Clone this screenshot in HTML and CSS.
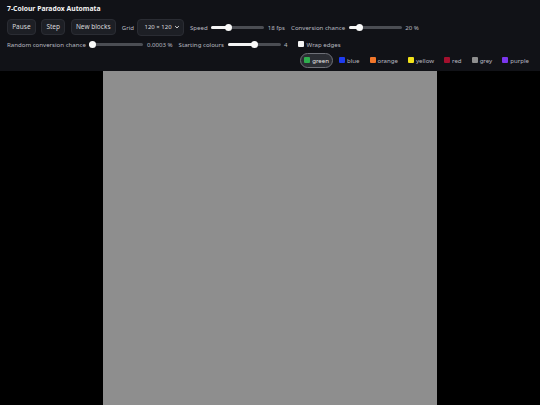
FILE: index.html
```html
<!DOCTYPE html>
<html>
<head>
<meta charset="utf-8">
<link rel="stylesheet" href="styles.css">
</head>
<body>
<header class="bar">
  <h1 class="title">7-Colour Paradox Automata</h1>
  <div class="controls">
    <div class="buttons">
      <button class="btn">Pause</button>
      <button class="btn">Step</button>
      <button class="btn">New blocks</button>
    </div>
    <label class="field">Grid
      <span class="select">120 × 120 <svg class="chev" viewBox="0 0 8 8" width="6" height="6"><path d="M1.5 2.8 L4 5.2 L6.5 2.8" fill="none" stroke="#ddd" stroke-width="1.3"/></svg></span>
    </label>
    <label class="field">Speed
      <span class="range w53"><span class="fill" style="width:32%"></span><span class="thumb" style="left:32%"></span></span>
      <span class="val">18 fps</span>
    </label>
    <label class="field">Conversion chance
      <span class="range w53"><span class="fill" style="width:20%"></span><span class="thumb" style="left:20%"></span></span>
      <span class="val">20 %</span>
    </label>
    <label class="field">Random conversion chance
      <span class="range w54"><span class="fill" style="width:5%"></span><span class="thumb" style="left:5%"></span></span>
      <span class="val">0.0003 %</span>
    </label>
    <label class="field">Starting colours
      <span class="range w53"><span class="fill" style="width:50%"></span><span class="thumb" style="left:50%"></span></span>
      <span class="val">4</span>
    </label>
    <label class="field check"><span class="box"></span>Wrap edges</label>
    <div class="palette">
      <span class="chip active"><span class="sw" style="background:#2fae4e"></span>green</span>
      <span class="chip"><span class="sw" style="background:#1f3cf0"></span>blue</span>
      <span class="chip"><span class="sw" style="background:#f2762a"></span>orange</span>
      <span class="chip"><span class="sw" style="background:#f2e21a"></span>yellow</span>
      <span class="chip"><span class="sw" style="background:#a3102e"></span>red</span>
      <span class="chip"><span class="sw" style="background:#8e8e8e"></span>grey</span>
      <span class="chip"><span class="sw" style="background:#7a36ec"></span>purple</span>
    </div>
  </div>
</header>
<main class="stage">
  <div class="canvas"></div>
</main>
</body>
</html>
```

FILE: styles.css
```css
html, body {
  margin: 0;
  padding: 0;
  background: #000;
  height: 100%;
  overflow: hidden;
}
body {
  font-family: "Noto Sans", "Open Sans", sans-serif;
  font-size: 6.1px;
  color: #d8d9dc;
}
.bar {
  background: #111217;
  padding: 4px 7px 4px 7px;
}
.title {
  margin: 0 0 5px 0;
  font-size: 6.8px;
  font-weight: 700;
  color: #f4f4f4;
  line-height: 10px;
}
.controls {
  display: flex;
  flex-wrap: wrap;
  align-items: center;
  column-gap: 6px;
  row-gap: 2px;
}
.buttons {
  display: flex;
  gap: 5.5px;
}
.btn {
  font: inherit;
  font-size: 6.5px;
  color: #d8d9dc;
  background: #1d1f25;
  border: 1px solid #2a2c33;
  border-radius: 4px;
  height: 16px;
  padding: 0 4.2px;
  line-height: 14px;
}
.field {
  display: flex;
  align-items: center;
  gap: 3.5px;
  color: #b8bac0;
  height: 14px;
}
.select {
  display: inline-flex;
  align-items: center;
  justify-content: space-between;
  width: 35.5px;
  height: 15px;
  padding: 0 3px 0 6px;
  background: #1d1f25;
  border: 1px solid #2a2c33;
  border-radius: 4px;
  color: #d8d9dc;
  font-size: 6px;
}
.range {
  position: relative;
  display: inline-block;
  height: 3px;
  background: #4b4d53;
  border-radius: 2px;
}
.w53 { width: 53px; }
.w54 { width: 54px; }
.fill {
  position: absolute;
  left: 0;
  top: 0;
  bottom: 0;
  background: #f4f4f4;
  border-radius: 2px;
}
.thumb {
  position: absolute;
  top: 50%;
  width: 7px;
  height: 7px;
  margin: -3.5px 0 0 -3.5px;
  background: #fafafa;
  border-radius: 50%;
}
.val {
  color: #b8bac0;
}
.check { gap: 3px; margin-left: 4px; }
.box {
  width: 6px;
  height: 6px;
  background: #f4f4f4;
  border-radius: 1px;
}
.palette {
  margin-left: auto;
  display: flex;
  align-items: center;
  gap: 2px;
  height: 14px;
}
.chip {
  display: inline-flex;
  align-items: center;
  gap: 2px;
  padding: 0 3px;
  height: 13px;
  border: 1px solid transparent;
  border-radius: 8px;
  color: #b8bac0;
}
.chip.active {
  background: #2b2d33;
  border-color: #6e7077;
  color: #e6e6e6;
}
.sw {
  width: 6px;
  height: 6px;
  border-radius: 1px;
}
.stage {
  display: flex;
  justify-content: center;
}
.canvas {
  width: 334px;
  height: 334px;
  background: #8e8e8e;
}
```
